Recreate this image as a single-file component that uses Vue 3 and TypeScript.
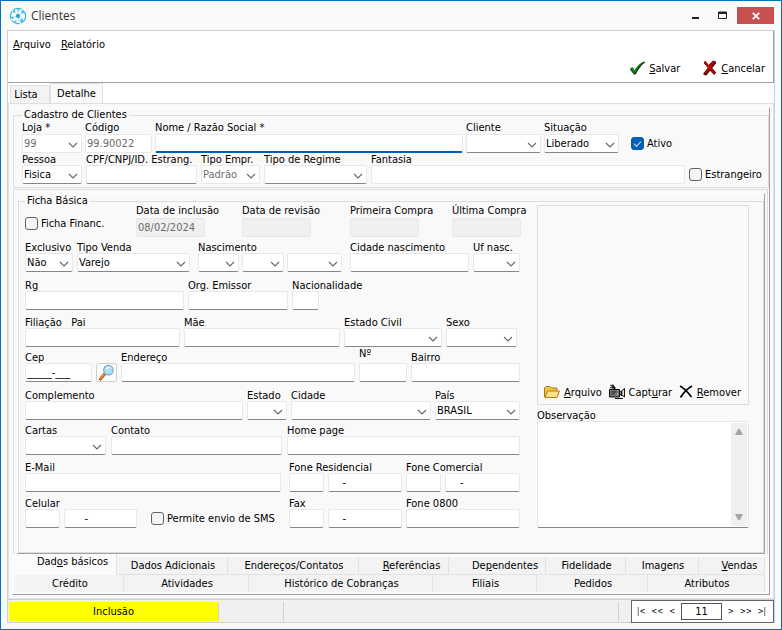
<script setup lang="ts">
import { h, ref } from 'vue'

type Kind = 'text' | 'select' | 'check' | 'search' | 'group'

interface Field {
  id: string
  kind: Kind
  label: string
  value?: string
  disabled?: boolean
  checked?: boolean
  mod?: string
  parts?: Field[]
}

interface Row {
  name: string
  fields: Field[]
}

const text = (id: string, label: string, value = '', extra: Partial<Field> = {}): Field => ({ id, label, value, kind: 'text', ...extra })
const select = (id: string, label: string, value = '', extra: Partial<Field> = {}): Field => ({ id, label, value, kind: 'select', ...extra })
const check = (id: string, label: string, checked = false): Field => ({ id, label, checked, kind: 'check' })
const phone = (id: string, label: string, mask: string): Field => ({
  id,
  label,
  kind: 'group',
  mod: 'phone',
  parts: [text(id, 'DDD'), text(id + '-numero', 'Número', mask)],
})

const cadastro: Row[] = [
  {
    name: 'identity',
    fields: [
      select('loja', 'Loja *', '99', { disabled: true }),
      text('codigo', 'Código', '99.90022', { disabled: true }),
      text('nome', 'Nome / Razão Social *', '', { mod: 'active' }),
      select('cliente', 'Cliente'),
      select('situacao', 'Situação', 'Liberado'),
      check('ativo', 'Ativo', true),
    ],
  },
  {
    name: 'kind',
    fields: [
      select('pessoa', 'Pessoa', 'Fisica'),
      text('cpf', 'CPF/CNPJ/ID. Estrang.'),
      select('tipo-empr', 'Tipo Empr.', 'Padrão', { disabled: true }),
      select('regime', 'Tipo de Regime'),
      text('fantasia', 'Fantasia', '', { mod: 'plain' }),
      check('estrangeiro', 'Estrangeiro'),
    ],
  },
]

const ficha: Row[] = [
  {
    name: 'dates',
    fields: [
      check('ficha-financ', 'Ficha Financ.'),
      text('inclusao', 'Data de inclusão', '08/02/2024', { disabled: true }),
      text('revisao', 'Data de revisão', '', { disabled: true }),
      text('primeira', 'Primeira Compra', '', { disabled: true }),
      text('ultima', 'Última Compra', '', { disabled: true }),
    ],
  },
  {
    name: 'birth',
    fields: [
      select('exclusivo', 'Exclusivo', 'Não'),
      select('tipo-venda', 'Tipo Venda', 'Varejo'),
      {
        id: 'nasc',
        kind: 'group',
        label: 'Nascimento',
        mod: 'birthday',
        parts: [select('nasc', 'Dia'), select('nasc-mes', 'Mês'), select('nasc-ano', 'Ano')],
      },
      text('cidade-nasc', 'Cidade nascimento'),
      select('uf-nasc', 'Uf nasc.'),
    ],
  },
  { name: 'document', fields: [text('rg', 'Rg'), text('emissor', 'Org. Emissor'), text('nacionalidade', 'Nacionalidade', '', { mod: 'short' })] },
  {
    name: 'parents',
    fields: [text('pai', 'Filiação\u00a0\u00a0 Pai'), text('mae', 'Mãe'), select('estado-civil', 'Estado Civil'), select('sexo', 'Sexo')],
  },
  {
    name: 'address',
    fields: [
      text('cep', 'Cep', '_____-___'),
      { id: 'buscar-cep', kind: 'search', label: 'Buscar Cep' },
      text('endereco', 'Endereço'),
      text('numero', 'Nº', '', { mod: 'raised' }),
      text('bairro', 'Bairro'),
    ],
  },
  {
    name: 'city',
    fields: [text('complemento', 'Complemento'), select('estado', 'Estado'), select('cidade', 'Cidade'), select('pais', 'País', 'BRASIL')],
  },
  { name: 'contact', fields: [select('cartas', 'Cartas'), text('contato', 'Contato'), text('home', 'Home page')] },
  {
    name: 'phones',
    fields: [text('email', 'E-Mail', '', { mod: 'mail' }), phone('residencial', 'Fone Residencial', '    -'), phone('comercial', 'Fone Comercial', '    -')],
  },
  {
    name: 'mobile',
    fields: [phone('celular', 'Celular', '      -'), check('sms', 'Permite envio de SMS'), phone('fax', 'Fax', '    -'), text('fone-0800', 'Fone 0800')],
  },
]

const upperTabs = ['Dad&os básicos', 'Dados Adicionais', 'Endereços/Contatos', '&Referências', 'De&pendentes', 'Fidelidade', 'Imagens', '&Vendas']
const lowerTabs = ['Crédito', 'Atividades', 'Histórico de Cobranças', 'Filiais', 'Pedidos', 'Atributos']
const current = ref('Dad&os básicos')
const page = ref('11')

// Renders a caption whose shortcut letter follows an ampersand.
const Caption = (props: { text: string }) => {
  const at = props.text.indexOf('&')
  if (at < 0) return h('span', props.text)
  return h('span', [props.text.slice(0, at), h('u', props.text[at + 1]), props.text.slice(at + 2)])
}
Caption.props = ['text']

const Chevron = () =>
  h('svg', { class: 'chevron', viewBox: '0 0 10 6', width: 10, height: 6, 'aria-hidden': 'true' }, [
    h('path', { d: 'M1 1l4 4 4-4', fill: 'none', stroke: '#666', 'stroke-width': 1.1 }),
  ])

const groups = [
  { title: 'Cadastro de Clientes', rows: cadastro },
  { title: 'Ficha Básica', rows: ficha },
]
</script>

<template>
  <div class="window">
    <header class="titlebar">
      <svg class="logo" viewBox="0 0 18 18" width="18" height="18" aria-hidden="true">
        <circle cx="9" cy="9" r="7.6" fill="#f4fcff" stroke="#3ab4dc" stroke-width="1.1" stroke-dasharray="9 1.2" />
        <path d="M9 9L5 4M9 9l5-4M9 9l-6 2M9 9l1 6M9 9l5 3M9 9V3" stroke="#8fd5ec" stroke-width=".8" />
        <circle cx="9" cy="9" r="2.1" fill="#1ca3d4" />
        <g fill="#45bce2">
          <circle cx="5" cy="4.4" r="1.2" /><circle cx="13.6" cy="5" r="1.4" /><circle cx="3.4" cy="10.6" r="1.2" />
          <circle cx="6.6" cy="14.6" r="1.1" /><circle cx="12.6" cy="13.6" r="1.5" /><circle cx="9.4" cy="2.8" r="1" />
        </g>
      </svg>
      <h1>Clientes</h1>
      <div class="controls">
        <button type="button" aria-label="Minimizar"><svg viewBox="0 0 9 9" width="9" height="9"><path d="M1 6h7v2H1z" fill="#222" /></svg></button>
        <button type="button" aria-label="Maximizar"><svg viewBox="0 0 9 9" width="9" height="9"><path d="M.5 1v6.5h8V1z" fill="none" stroke="#222" /><path d="M0 1h9v2H0z" fill="#222" /></svg></button>
        <button type="button" class="close" aria-label="Fechar"><svg viewBox="0 0 8 8" width="8" height="8"><path d="M.8.8l6.400 6.400M7.200.8L.8 7.200" stroke="#fff" stroke-width="1.800" /></svg></button>
      </div>
    </header>

    <main class="frame">
      <div class="toolbar">
        <nav class="menu">
          <button type="button"><Caption text="&Arquivo" /></button>
          <button type="button"><Caption text="&Relatório" /></button>
        </nav>
        <div class="actions">
          <button type="button">
            <svg viewBox="0 0 16 14" width="16" height="14" aria-hidden="true"><path d="M1 8.500l3-1.500 2 3C8 6 11 2.500 16 .5v1C12 4 9 9 6.600 13.500H5z" fill="#111" /><path d="M1 7.500l2.500-1.500 2 3.500C7.500 6 10.500 2 15.500.3 11.500 3 8.500 8 6 12.500H5z" fill="#078a12" /></svg>
            <Caption text="&Salvar" />
          </button>
          <button type="button">
            <svg viewBox="0 0 14 16" width="14" height="16" aria-hidden="true"><path d="M2 1l3.500 4L10 .8l3 .7v1.800L9.200 8l4 4.600-2 2.400L7 10.800 3.400 15.500.5 14.800V13L5 8 1 3.600z" fill="#4c0000" /><path d="M2 .5l3.800 4.700L10.500.5l1.800 1L8 7.500l4.500 5-1.500 1.500-4.500-4.500L2.500 14 1 13l4-5.500L1 2.500z" fill="#b80707" /></svg>
            <Caption text="&Cancelar" />
          </button>
        </div>
      </div>

      <nav class="top-tabs" role="tablist">
        <button type="button" role="tab" aria-selected="false">Lista</button>
        <button type="button" role="tab" aria-selected="true" class="current">Detalhe</button>
      </nav>

      <section class="page">
        <div class="sheet">
          <div v-for="(group, index) in groups" :key="group.title" :class="index ? 'notebook' : 'summary'">
            <div class="pane">
              <fieldset>
                <legend>{{ group.title }}</legend>
                <div class="columns">
                  <div class="rows">
                    <div v-for="row in group.rows" :key="row.name" class="row" :class="row.name">
                      <template v-for="field in row.fields" :key="field.id">
                        <label v-if="field.kind === 'check'" class="check">
                          <input type="checkbox" :checked="field.checked" />
                          <span>{{ field.label }}</span>
                        </label>
                        <button v-else-if="field.kind === 'search'" type="button" class="search" :aria-label="field.label">
                          <svg viewBox="0 0 18 18" width="17" height="17" aria-hidden="true">
                            <path d="M7.500 10L2.500 16" stroke="#ad5b1d" stroke-width="3.200" stroke-linecap="round" />
                            <path d="M7 10.200L2.600 15.500" stroke="#e89a52" stroke-width="1.300" stroke-linecap="round" />
                            <circle cx="11" cy="6.500" r="5" fill="#aedff8" stroke="#7ba6c4" stroke-width="1.300" />
                            <path d="M7.800 5.500a3.500 3.500 0 0 1 5-2.200c-1 1.800-3 2.500-5 2.200z" fill="#f1fbff" />
                          </svg>
                        </button>
                        <div v-else class="field" :class="field.mod">
                          <label :for="field.id">{{ field.label }}</label>
                          <div class="inputs">
                            <template v-for="part in field.parts ?? [field]" :key="part.id">
                              <div v-if="part.kind === 'select'" class="select">
                                <select :id="part.id" :disabled="part.disabled" :aria-label="field.parts ? part.label : undefined">
                                  <option>{{ part.value }}</option>
                                </select>
                                <Chevron />
                              </div>
                              <input v-else :id="part.id" type="text" :value="part.value" :disabled="part.disabled" :aria-label="field.parts ? part.label : undefined" />
                            </template>
                          </div>
                        </div>
                      </template>
                    </div>
                  </div>

                  <aside v-if="index" class="side">
                    <div class="photo">
                      <button type="button">
                        <svg viewBox="0 0 16 14" width="16" height="14" aria-hidden="true"><path d="M.5 12V3L2 1.500h4L7.500 3h5.500v3" fill="#f5c443" stroke="#a87512" /><path d="M1 12.500L3.500 6h12L13 12.500z" fill="#ffe08a" stroke="#b47d12" /></svg>
                        <Caption text="&Arquivo" />
                      </button>
                      <button type="button">
                        <svg viewBox="0 0 16 16" width="16" height="16" aria-hidden="true"><path d="M.5 5.500h10V13H.5z" fill="#777" stroke="#111" /><path d="M10.500 8.500l1.500-1 3.500-3v8.500l-3.500-2.500-1.500-.5z" fill="#ddd" stroke="#111" /><path d="M1.500 1l5 3.500M3.500.5l3 4M1 3.500l5 1M6 14.500h8" stroke="#111" stroke-width="1.200" /><path d="M2.500 8h5M2.500 10h3" stroke="#222" /><path d="M12.500 7v5" stroke="#111" stroke-width="1.500" /><path d="M8 9.500h1v1H8z" fill="#8f8" /></svg>
                        <Caption text="Capt&urar" />
                      </button>
                      <button type="button">
                        <svg viewBox="0 0 14 14" width="14" height="14" aria-hidden="true"><path d="M1 1c4 2 8 6.500 11.500 11" fill="none" stroke="#000" stroke-width="1.700" /><path d="M13 1C8.500 3.500 4.500 7.500 1.500 12.500" fill="none" stroke="#000" stroke-width="1.700" /></svg>
                        <Caption text="&Remover" />
                      </button>
                    </div>
                    <label for="observacao">Observação</label>
                    <div class="memo">
                      <textarea id="observacao"></textarea>
                      <div class="scroll" aria-hidden="true">
                        <svg viewBox="0 0 8 6" width="8" height="6"><path d="M3 0h2l3 6H0z" fill="#a6a6a6" /></svg>
                        <svg viewBox="0 0 8 6" width="8" height="6"><path d="M0 0h8L5 6H3z" fill="#a6a6a6" /></svg>
                      </div>
                    </div>
                  </aside>
                </div>
              </fieldset>
            </div>
          </div>

          <div class="bottom-tabs" role="tablist">
            <div class="upper">
              <button v-for="tab in upperTabs" :key="tab" type="button" role="tab" :aria-selected="tab === current" :class="{ current: tab === current, accel: tab.includes('&') }" @click="current = tab">
                <Caption :text="tab" />
              </button>
            </div>
            <div class="lower">
              <button v-for="tab in lowerTabs" :key="tab" type="button" role="tab" :aria-selected="tab === current" @click="current = tab">
                <Caption :text="tab" />
              </button>
            </div>
          </div>
        </div>
      </section>

      <footer class="status">
        <div class="mode">Inclusão</div>
        <div></div>
        <div></div>
        <div></div>
        <div class="pager">
          <button type="button" aria-label="Primeiro">|&lt;</button>
          <button type="button" aria-label="Voltar dez">&lt;&lt;</button>
          <button type="button" aria-label="Anterior">&lt;</button>
          <input v-model="page" type="text" aria-label="Registro" />
          <button type="button" aria-label="Próximo">&gt;</button>
          <button type="button" aria-label="Avançar dez">&gt;&gt;</button>
          <button type="button" aria-label="Último">&gt;|</button>
        </div>
      </footer>
    </main>
  </div>
</template>

<style>
body {
  margin: 0;
}
.chevron {
  grid-area: 1 / 1;
  justify-self: end;
  align-self: center;
  margin: 2px 4px 0 0;
  pointer-events: none;
}
</style>

<style scoped>
* {
  box-sizing: border-box;
}
.window {
  display: flex;
  flex-direction: column;
  min-height: 100vh;
  padding: 0 6px 6px;
  border: 1px solid #0072c6;
  background: #fafafa;
  color: #000;
  font: 11px/13px 'DejaVu Sans Condensed', 'Noto Sans', sans-serif;
}
button,
input,
select,
textarea {
  margin: 0;
  padding: 0;
  border: 0;
  background: none;
  color: inherit;
  font: inherit;
}
button {
  white-space: nowrap;
}
.titlebar {
  display: flex;
  align-items: center;
  gap: 4px;
  height: 29px;
  padding: 0 1px 0 2px;
}
h1 {
  flex: 1;
  margin: 0;
  color: #333;
  font: 12px/18px 'Open Sans', sans-serif;
}
.controls {
  display: flex;
}
.controls button {
  display: grid;
  place-items: center;
  width: 27px;
  height: 17px;
}
.controls .close {
  width: 37px;
  margin-left: 1px;
  background: #c75050;
}
.frame {
  display: flex;
  flex: 1;
  flex-direction: column;
  border: 1px solid #d0d0d0;
  background: #fff;
}
.toolbar {
  display: flex;
  flex-direction: column;
  justify-content: space-between;
  height: 52px;
  padding: 7px 8px 6px 5px;
  border-right: 1px solid #a0a0a0;
  border-bottom: 1px solid #a0a0a0;
}
.menu {
  display: flex;
  gap: 10px;
}
.actions {
  display: flex;
  justify-content: flex-end;
  gap: 23px;
}
.actions button,
.photo button {
  display: flex;
  align-items: center;
  gap: 4px;
  height: 16px;
}
.top-tabs {
  display: flex;
  align-items: flex-end;
  height: 20px;
  padding-left: 2px;
}
.top-tabs button {
  width: 40px;
  height: 18px;
  padding-right: 8px;
  border: 1px solid #e0e0e0;
  border-bottom: 0;
  background: #f3f3f3;
}
.top-tabs .current {
  width: 53px;
  height: 20px;
  padding-right: 0;
  background: #f9f9f9;
}
.page {
  display: flex;
  flex: 1;
  padding: 3px;
  border: 1px solid #e0e0e0;
  background: #f9f9f9;
}
.sheet {
  display: flex;
  flex: 1;
  flex-direction: column;
  min-width: 0;
  border: 1px solid #fff;
  border-right-color: #a0a0a0;
  border-bottom-color: #a0a0a0;
}
.summary {
  padding: 1px 0;
}
.notebook {
  display: flex;
  flex: 1;
  margin-right: 1px;
  padding: 3px 2px 0 3px;
  border: 1px solid #dcdcdc;
  border-bottom: 0;
}
.notebook .pane {
  display: flex;
  flex: 1;
  min-width: 0;
  padding-top: 1px;
  border: 1px solid #fff;
  border-right-color: #a0a0a0;
  border-bottom-color: #a0a0a0;
}
fieldset {
  flex: 1;
  min-width: 0;
  margin: 0;
  padding: 0 3px 3px 8px;
  border: 1px solid #dcdcdc;
}
.notebook fieldset {
  padding: 0 14px 0 6px;
}
legend {
  padding: 0 2px;
  line-height: 12px;
}
.notebook .columns {
  display: grid;
  grid-template-columns: 495fr 212fr;
  gap: 17px;
  margin-top: -3px;
}
.row {
  display: grid;
  align-items: end;
  gap: 4px;
  margin-top: 6px;
}
.identity {
  grid-template-columns: 60fr 67fr 308fr 75fr 75fr 143fr;
  gap: 3px;
  margin-top: 0;
}
.kind {
  grid-template-columns: 60fr 111fr 59fr 103fr 314fr 76fr;
  margin-top: 0;
}
.dates {
  grid-template-columns: 111fr 106fr 108fr 102fr 68fr;
  gap: 0;
  margin-top: 0;
}
.birth {
  grid-template-columns: 48fr 113fr 152fr 119fr 47fr;
  margin-top: 4px;
}
.document {
  grid-template-columns: 159fr 100fr 228fr;
  margin-top: 7px;
}
.parents {
  grid-template-columns: 155fr 156fr 98fr 71fr;
  padding-right: 3px;
}
.address {
  grid-template-columns: 67fr 21fr 234fr 48fr 109fr;
  margin-top: 0;
}
.city {
  grid-template-columns: 218fr 40fr 140fr 85fr;
  margin-top: 7px;
}
.contact {
  grid-template-columns: 81fr 171fr 233fr;
  gap: 5px;
  margin-top: 4px;
}
.phones {
  grid-template-columns: 260fr 113fr 114fr;
}
.mobile {
  grid-template-columns: 112fr 144fr 113fr 114fr;
  margin-top: 5px;
}
.field {
  display: flex;
  flex-direction: column;
  min-width: 0;
}
.field > label {
  height: 12px;
  white-space: nowrap;
}
.identity .field > label {
  height: 13px;
}
.dates .field > label {
  height: 14px;
}
.field.raised > label {
  height: 16px;
}
.birthday {
  padding: 0 4px;
}
.mail {
  padding-right: 4px;
}
.inputs {
  display: grid;
  gap: 3px;
}
.short .inputs {
  width: 27px;
}
.birthday .inputs {
  grid-template-columns: 41fr 42fr 55fr;
}
.phone .inputs {
  grid-template-columns: 35fr 74fr;
  gap: 4px;
}
.select {
  display: grid;
  min-width: 0;
}
select {
  grid-area: 1 / 1;
  appearance: none;
}
.field input,
select {
  width: 100%;
  min-width: 0;
  height: 19px;
  padding: 0 1px;
  border: 1px solid #e8e8e8;
  border-bottom-color: #868686;
  border-radius: 2px;
  background: #fff;
}
.field input:disabled,
select:disabled,
.plain input {
  border-bottom-color: #e8e8e8;
  color: #6d6d6d;
  opacity: 1;
}
.field.active input {
  border-bottom: 2px solid #005fb8;
}
.dates .field input {
  width: 69px;
  background: #f0f0f0;
}
.check {
  display: flex;
  align-items: center;
  gap: 3px;
  height: 19px;
  white-space: nowrap;
}
.identity .check {
  padding-left: 9px;
}
.dates .check {
  height: 27px;
}
.mobile .check {
  padding-left: 10px;
}
.check input {
  display: grid;
  place-items: center;
  flex: none;
  width: 13px;
  height: 13px;
  border: 1px solid #626262;
  border-radius: 3px;
  background: #f5f5f5;
  appearance: none;
}
.check input:checked {
  border-color: #005fb8;
  background: #005fb8;
}
.check input:checked::before {
  width: 6px;
  height: 3px;
  margin-top: -2px;
  border: solid #cfe2f3;
  border-width: 0 0 1px 1px;
  content: '';
  transform: rotate(-45deg);
}
.search {
  display: grid;
  place-items: center;
  height: 19px;
  border: 1px solid #cfcfcf;
  border-radius: 3px;
  background: #fdfdfd;
}
.side {
  display: flex;
  flex-direction: column;
  padding-top: 1px;
}
.photo {
  display: flex;
  align-items: flex-end;
  justify-content: space-between;
  height: 200px;
  padding: 0 7px 4px 6px;
  border: 1px solid #dcdcdc;
}
.side > label {
  height: 12px;
  margin-top: 4px;
}
.memo {
  display: flex;
  height: 107px;
  padding: 1px;
  border: 1px solid #e8e8e8;
  border-bottom-color: #868686;
  border-radius: 2px;
  background: #fff;
}
textarea {
  flex: 1;
  min-width: 0;
  resize: none;
}
.scroll {
  display: flex;
  flex-direction: column;
  align-items: center;
  justify-content: space-between;
  width: 16px;
  padding: 6px 0;
  background: #f0f0f0;
}
.bottom-tabs {
  padding: 0 4px 2px 0;
}
.upper,
.lower {
  display: grid;
  align-items: end;
}
.upper {
  grid-template-columns: 104fr 111fr 131fr 90fr 97fr 80fr 73fr 66fr;
}
.lower {
  grid-template-columns: 109fr 125fr 184fr 104fr 111fr 117fr;
  padding-left: 2px;
}
.bottom-tabs button {
  height: 18px;
  padding-left: 2px;
  border-right: 1px solid #e2e2e2;
  background: #f3f3f3;
}
.upper button {
  border-bottom: 1px solid #e2e2e2;
}
.bottom-tabs .lower button {
  height: 17px;
}
.bottom-tabs .accel {
  padding-left: 16px;
}
.bottom-tabs .upper .current {
  height: 21px;
  padding-bottom: 6px;
  border-bottom: 0;
  background: #fbfbfb;
}
.status {
  display: grid;
  grid-template-columns: 211fr 65fr 335fr 12fr 143fr;
  height: 23px;
  border-top: 1px solid #d0d0d0;
  background: #f0f0f0;
}
.status > div {
  margin: 2px 0;
  border-right: 1px solid #d0d0d0;
}
.status > .mode {
  padding: 3px 0;
  border-left: 1px solid #f0f0f0;
  background: #ff0;
  text-align: center;
}
.status > div:nth-child(4) {
  border: 0;
}
.status > .pager {
  display: flex;
  align-items: center;
  justify-content: space-between;
  margin: 0;
  padding: 0 7px 1px 5px;
  border: 1px solid #666;
  background: #fff;
}
.pager button {
  font-size: 8px;
}
.pager input {
  width: 41px;
  height: 17px;
  border: 1px solid #555;
  text-align: center;
}
</style>
